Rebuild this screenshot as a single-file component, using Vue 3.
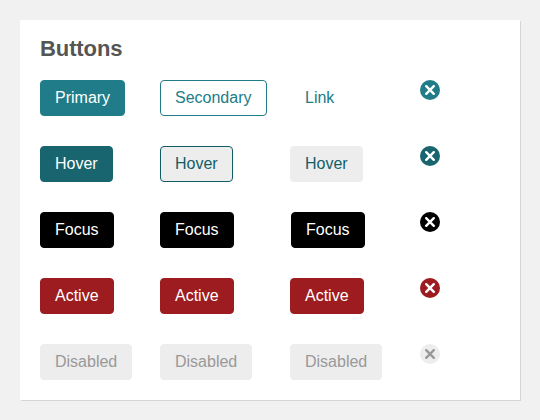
<script setup>
const rows = [
  { state: 'normal', labels: ['Primary', 'Secondary', 'Link'] },
  { state: 'hover', labels: ['Hover', 'Hover', 'Hover'] },
  { state: 'focus', labels: ['Focus', 'Focus', 'Focus'] },
  { state: 'active', labels: ['Active', 'Active', 'Active'] },
  { state: 'disabled', labels: ['Disabled', 'Disabled', 'Disabled'] },
]
const kinds = ['primary', 'secondary', 'link']
</script>

<template>
  <main class="page">
    <section class="panel">
      <h2 class="title">Buttons</h2>
      <div class="rows">
        <div v-for="row in rows" :key="row.state" class="row" :class="row.state">
          <div v-for="(kind, i) in kinds" :key="kind" class="cell">
            <button type="button" class="btn" :class="kind" :disabled="row.state === 'disabled'">{{ row.labels[i] }}</button>
          </div>
          <button type="button" class="close" :disabled="row.state === 'disabled'">
            <svg viewBox="0 0 20 20" width="20" height="20" fill="none" stroke="currentColor" stroke-width="2.4" stroke-linecap="round">
              <path d="M6.2 6.2l7.6 7.6M13.8 6.2l-7.6 7.6" />
            </svg>
          </button>
        </div>
      </div>
    </section>
  </main>
</template>

<style>
body {
  background: #f1f1f1;
}
</style>

<style scoped>
.page {
  box-sizing: border-box;
  height: 420px;
  padding: 20px;
  background: #f1f1f1;
  font-family: "Liberation Sans", Arial, sans-serif;
}
.panel {
  box-sizing: border-box;
  height: 380px;
  padding: 16px 20px 20px;
  background: #fff;
  box-shadow: 1px 1px 0 #d5d5d5;
}
.title {
  margin: 0 0 18px;
  font-size: 22px;
  line-height: 26px;
  font-weight: 700;
  letter-spacing: -0.1px;
  color: #555;
}
.rows {
  display: grid;
  gap: 30px;
}
.row {
  display: grid;
  grid-template-columns: 120px 130px 130px 20px;
  align-items: start;
}
.cell {
  display: flex;
}
.btn {
  box-sizing: border-box;
  height: 36px;
  margin: 0;
  padding: 0 14px;
  border: 1px solid transparent;
  border-radius: 4px;
  font: 400 16px/34px "Liberation Sans", Arial, sans-serif;
  white-space: nowrap;
}
.close {
  display: block;
  width: 20px;
  height: 20px;
  padding: 0;
  border: 0;
  border-radius: 50%;
  color: #fff;
}
.close svg {
  display: block;
}
.normal .primary {
  background: #217c89;
  border-color: #217c89;
  color: #fff;
}
.normal .secondary {
  background: #fff;
  border-color: #217c89;
  color: #217c89;
}
.normal .link {
  background: transparent;
  color: #217c89;
}
.normal .close {
  background: #217c89;
}
.hover .primary {
  background: #18656f;
  border-color: #18656f;
  color: #fff;
}
.hover .secondary {
  background: #ededed;
  border-color: #115e67;
  color: #115e67;
}
.hover .link {
  background: #ededed;
  border-color: #ededed;
  color: #115e67;
}
.hover .close {
  background: #18656f;
}
.focus .btn {
  background: #000;
  border-color: #000;
  color: #fff;
}
.focus .link {
  margin-left: 1px;
}
.focus .close {
  background: #000;
}
.active .btn {
  background: #9c1c20;
  border-color: #9c1c20;
  color: #fff;
}
.active .close {
  background: #9c1c20;
}
.disabled .btn {
  background: #ededed;
  border-color: #ededed;
  color: #999;
}
.disabled .close {
  background: #ededed;
  color: #999;
}
</style>
